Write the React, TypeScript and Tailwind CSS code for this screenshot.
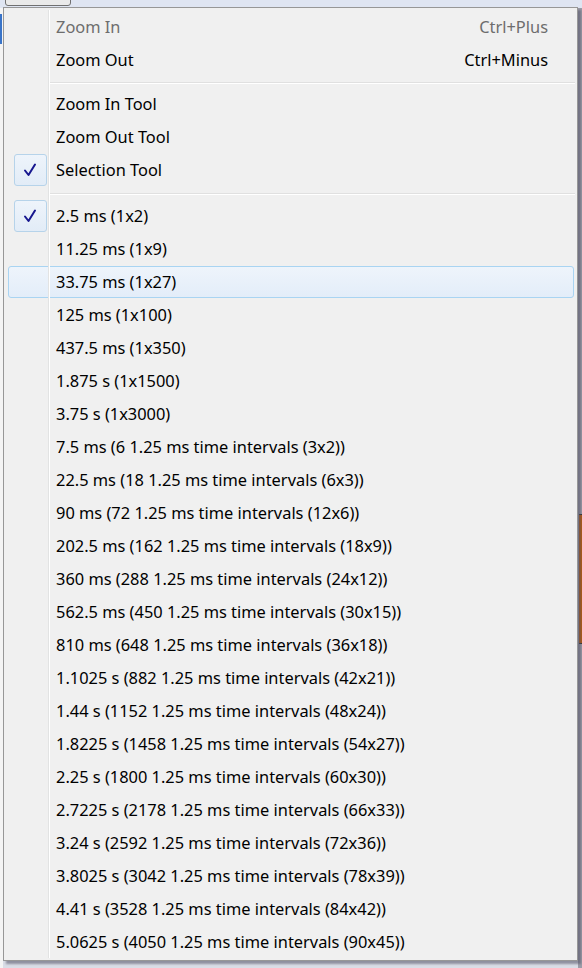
import React from 'react';

type Item =
  | { kind: 'item'; label: string; shortcut?: string; disabled?: boolean; checked?: boolean; hover?: boolean }
  | { kind: 'sep'; tall?: boolean };

const items: Item[] = [
  { kind: 'item', label: 'Zoom In', shortcut: 'Ctrl+Plus', disabled: true },
  { kind: 'item', label: 'Zoom Out', shortcut: 'Ctrl+Minus' },
  { kind: 'sep' },
  { kind: 'item', label: 'Zoom In Tool' },
  { kind: 'item', label: 'Zoom Out Tool' },
  { kind: 'item', label: 'Selection Tool', checked: true },
  { kind: 'sep', tall: true },
  { kind: 'item', label: '2.5 ms (1x2)', checked: true },
  { kind: 'item', label: '11.25 ms (1x9)' },
  { kind: 'item', label: '33.75 ms (1x27)', hover: true },
  { kind: 'item', label: '125 ms (1x100)' },
  { kind: 'item', label: '437.5 ms (1x350)' },
  { kind: 'item', label: '1.875 s (1x1500)' },
  { kind: 'item', label: '3.75 s (1x3000)' },
  { kind: 'item', label: '7.5 ms (6 1.25 ms time intervals (3x2))' },
  { kind: 'item', label: '22.5 ms (18 1.25 ms time intervals (6x3))' },
  { kind: 'item', label: '90 ms (72 1.25 ms time intervals (12x6))' },
  { kind: 'item', label: '202.5 ms (162 1.25 ms time intervals (18x9))' },
  { kind: 'item', label: '360 ms (288 1.25 ms time intervals (24x12))' },
  { kind: 'item', label: '562.5 ms (450 1.25 ms time intervals (30x15))' },
  { kind: 'item', label: '810 ms (648 1.25 ms time intervals (36x18))' },
  { kind: 'item', label: '1.1025 s (882 1.25 ms time intervals (42x21))' },
  { kind: 'item', label: '1.44 s (1152 1.25 ms time intervals (48x24))' },
  { kind: 'item', label: '1.8225 s (1458 1.25 ms time intervals (54x27))' },
  { kind: 'item', label: '2.25 s (1800 1.25 ms time intervals (60x30))' },
  { kind: 'item', label: '2.7225 s (2178 1.25 ms time intervals (66x33))' },
  { kind: 'item', label: '3.24 s (2592 1.25 ms time intervals (72x36))' },
  { kind: 'item', label: '3.8025 s (3042 1.25 ms time intervals (78x39))' },
  { kind: 'item', label: '4.41 s (3528 1.25 ms time intervals (84x42))' },
  { kind: 'item', label: '5.0625 s (4050 1.25 ms time intervals (90x45))' },
];

const CheckMark = () => (
  <svg width="16" height="16" viewBox="0 0 16 16">
    <path d="M3 8.5 L6.5 13 L13 2.5" fill="none" stroke="#17178f" strokeWidth="2" strokeLinejoin="round" strokeLinecap="round" />
  </svg>
);

const MenuRow: React.FC<{ item: Extract<Item, { kind: 'item' }> }> = ({ item }) => {
  const color = item.disabled ? 'text-[#6d6d6d]' : 'text-black';
  return (
    <div className="h-[33px] pl-[4px] pr-[3px] pt-[1px]">
      <div
        className={`h-full flex items-center rounded-[3px] border ${
          item.hover ? 'border-[#a9d4f2] bg-gradient-to-b from-[#eef4fb] to-[#e3edf9]' : 'border-transparent'
        }`}
      >
        <div className="w-[40px] h-full flex items-center justify-center">
          {item.checked && (
            <div className="w-[33px] h-[32px] ml-[2px] rounded-[3px] border border-[#b6d3ea] bg-gradient-to-b from-[#eef4fb] to-[#e2ecf7] flex items-center justify-center">
              <CheckMark />
            </div>
          )}
        </div>
        <span className={`pl-[7px] flex-1 ${color}`}>{item.label}</span>
        {item.shortcut && <span className={`pr-[25px] ${color}`}>{item.shortcut}</span>}
      </div>
    </div>
  );
};

export default function App() {
  return (
    <div
      className="relative w-[582px] h-[968px] overflow-hidden bg-[#d9dde6]"
      style={{ fontFamily: '"Segoe UI", "Noto Sans", "Open Sans", sans-serif' }}
    >
      {/* window content peeking out behind the menu */}
      <div className="absolute left-0 top-0 w-[582px] h-[8px] bg-[#dfe5f2]" />
      <div className="absolute left-[5px] top-[-6px] w-[66px] h-[12px] rounded-[3px] border border-[#707070] bg-[#eaeaea]" />
      <div className="absolute left-0 top-[8px] w-[3px] h-[960px] bg-[#f4f4f4]" />
      <div className="absolute left-0 top-[14px] w-[2px] h-[30px] bg-[#3a74c8]" />
      <div className="absolute right-0 top-[8px] w-[4px] h-[960px] bg-[#9c9ca8]" />
      <div className="absolute right-0 top-[514px] w-[3px] h-[130px] bg-[#b55a10] border-y border-[#333]" />

      <div className="relative ml-[3px] mt-[7px] w-[575px] h-[954px] bg-[#f0f0f0] border border-[#979797] shadow-[3px_3px_2px_rgba(80,80,100,0.55)] text-[16.4px] leading-none">
        {/* gutter line */}
        <div className="absolute left-[44px] top-[2px] bottom-[2px] flex">
          <div className="w-px h-full bg-[#e2e3e3]" />
          <div className="w-px h-full bg-white" />
        </div>
        <div className="pt-[2px]">
          {items.map((it, i) =>
            it.kind === 'sep' ? (
              <div
                key={i}
                className={`${it.tall ? 'h-[13px] pt-[7px]' : 'h-[11px] pt-[6px]'} pl-[45px] pr-[2px] flex flex-col`}
              >
                <div className="h-px bg-[#e0e0e0]" />
                <div className="h-px bg-white" />
              </div>
            ) : (
              <MenuRow key={i} item={it} />
            )
          )}
        </div>
      </div>
    </div>
  );
}
